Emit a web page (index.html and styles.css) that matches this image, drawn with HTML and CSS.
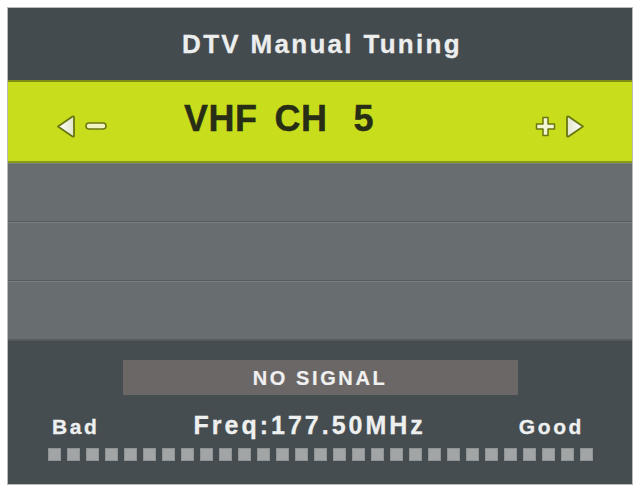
FILE: index.html
```html
<!DOCTYPE html>
<html>
<head>
<meta charset="utf-8">
<link rel="stylesheet" href="styles.css">
</head>
<body>
<div class="panel">
  <div class="header"><span class="title">DTV Manual Tuning</span></div>
  <div class="band">
    <div class="icons left">
      <svg class="tri" width="20" height="25" viewBox="0 0 20 25"><defs><linearGradient id="gl" x1="0" x2="1"><stop offset="0" stop-color="#ffffff"/><stop offset="1" stop-color="#e2e5cc"/></linearGradient></defs><path d="M2 12.5 L16.5 2.5 Q18 1.8 18 3.5 L18 21.5 Q18 23.2 16.5 22.5 Z" fill="url(#gl)" stroke="#687610" stroke-width="1.8" stroke-linejoin="round"/></svg>
      <svg class="dash" width="22" height="8" viewBox="0 0 22 8"><rect x="1" y="1" width="20" height="6" rx="3" fill="#f1f4c2" stroke="#687610" stroke-width="1.5"/></svg>
    </div>
    <div class="channel"><span class="w1">VHF</span><span class="w2">CH</span><span class="w3">5</span></div>
    <div class="icons right">
      <svg class="plus" width="21" height="21" viewBox="0 0 21 21"><path d="M8 1.5 H13 V8 H19.5 V13 H13 V19.5 H8 V13 H1.5 V8 H8 Z" fill="#f3f6d2" stroke="#687610" stroke-width="1.5" stroke-linejoin="round"/></svg>
      <svg class="tri" width="20" height="25" viewBox="0 0 20 25"><defs><linearGradient id="gr" x1="0" x2="1"><stop offset="0" stop-color="#e2e5cc"/><stop offset="1" stop-color="#ffffff"/></linearGradient></defs><path d="M18 12.5 L3.5 2.5 Q2 1.8 2 3.5 L2 21.5 Q2 23.2 3.5 22.5 Z" fill="url(#gr)" stroke="#687610" stroke-width="1.8" stroke-linejoin="round"/></svg>
    </div>
  </div>
  <div class="row"></div>
  <div class="row"></div>
  <div class="row"></div>
  <div class="bottom">
    <div class="status">NO SIGNAL</div>
    <div class="info">
      <span class="bad">Bad</span>
      <span class="freq">Freq:177.50MHz</span>
      <span class="good">Good</span>
    </div>
    <div class="meter">
      <span class="seg"></span><span class="seg"></span><span class="seg"></span><span class="seg"></span><span class="seg"></span><span class="seg"></span><span class="seg"></span><span class="seg"></span><span class="seg"></span><span class="seg"></span><span class="seg"></span><span class="seg"></span><span class="seg"></span><span class="seg"></span><span class="seg"></span><span class="seg"></span><span class="seg"></span><span class="seg"></span><span class="seg"></span><span class="seg"></span><span class="seg"></span><span class="seg"></span><span class="seg"></span><span class="seg"></span><span class="seg"></span><span class="seg"></span><span class="seg"></span><span class="seg"></span><span class="seg"></span>
    </div>
  </div>
</div>
</body>
</html>
```
FILE: styles.css
```css
html, body {
  margin: 0;
  padding: 0;
  background: #ffffff;
}
body {
  padding: 7px 4px 0 7px;
  font-family: "Liberation Sans", Arial, sans-serif;
  font-weight: bold;
}
.panel {
  width: 624px;
  height: 476px;
  border: 1px solid #b9bcbd;
  display: flex;
  flex-direction: column;
  background: #464d50;
}
.header {
  height: 72px;
  background: #444b4f;
  display: flex;
  align-items: center;
  justify-content: center;
}
.title {
  color: #eceeee;
  font-size: 26px;
  letter-spacing: 2.3px;
  margin-left: 4px;
  -webkit-text-stroke: 0.3px #eceeee;
}
.band {
  height: 79px;
  background: #c8dd1c;
  border-top: 2px solid #7d8d16;
  border-bottom: 2px solid #8a9a1c;
  display: flex;
  align-items: center;
  padding: 0 47px 0 48px;
}
.icons {
  display: flex;
  align-items: center;
  margin-top: 9px;
}
.left .dash { margin-left: 9px; }
.right { margin-left: auto; }
.right .tri { margin-left: 9px; }
.channel {
  display: flex;
  margin-left: 77px;
  margin-bottom: 6px;
  font-size: 36px;
  line-height: 36px;
  color: #282d16;
  letter-spacing: 0.5px;
  -webkit-text-stroke: 0.4px #282d16;
}
.w2 { margin-left: 17px; }
.w3 { margin-left: 26px; }
.row {
  height: 57px;
  background: #686d6f;
  border-top: 1px solid #797e80;
  border-bottom: 1px solid #575c5e;
}
.row:first-of-type { border-top-color: #6f7378; }
.bottom {
  flex: 1;
  background: #464d50;
  border-top: 1px solid #55595b;
  display: flex;
  flex-direction: column;
}
.status {
  margin: 19px auto 0;
  width: 395px;
  height: 35px;
  background: #6c6767;
  color: #f0f0f0;
  font-size: 20px;
  letter-spacing: 2.6px;
  line-height: 36px;
  text-align: center;
  -webkit-text-stroke: 0.2px #f0f0f0;
}
.info {
  display: flex;
  align-items: baseline;
  margin-top: 12px;
  height: 36px;
  line-height: 36px;
  padding-left: 44px;
  padding-right: 48px;
  color: #eef0f0;
}
.bad {
  font-size: 21px;
  letter-spacing: 2.6px;
  -webkit-text-stroke: 0.3px #eef0f0;
}
.freq {
  font-size: 25px;
  letter-spacing: 3px;
  margin-left: 94px;
  -webkit-text-stroke: 0.3px #eef0f0;
}
.good {
  font-size: 21px;
  letter-spacing: 2.6px;
  margin-left: auto;
  -webkit-text-stroke: 0.3px #eef0f0;
}
.meter {
  display: flex;
  gap: 6px;
  margin-top: 5px;
  padding-left: 40px;
}
.seg {
  width: 13px;
  height: 13px;
  box-sizing: border-box;
  background: #a2a5a5;
  border: 1px solid #8f9393;
}
```
